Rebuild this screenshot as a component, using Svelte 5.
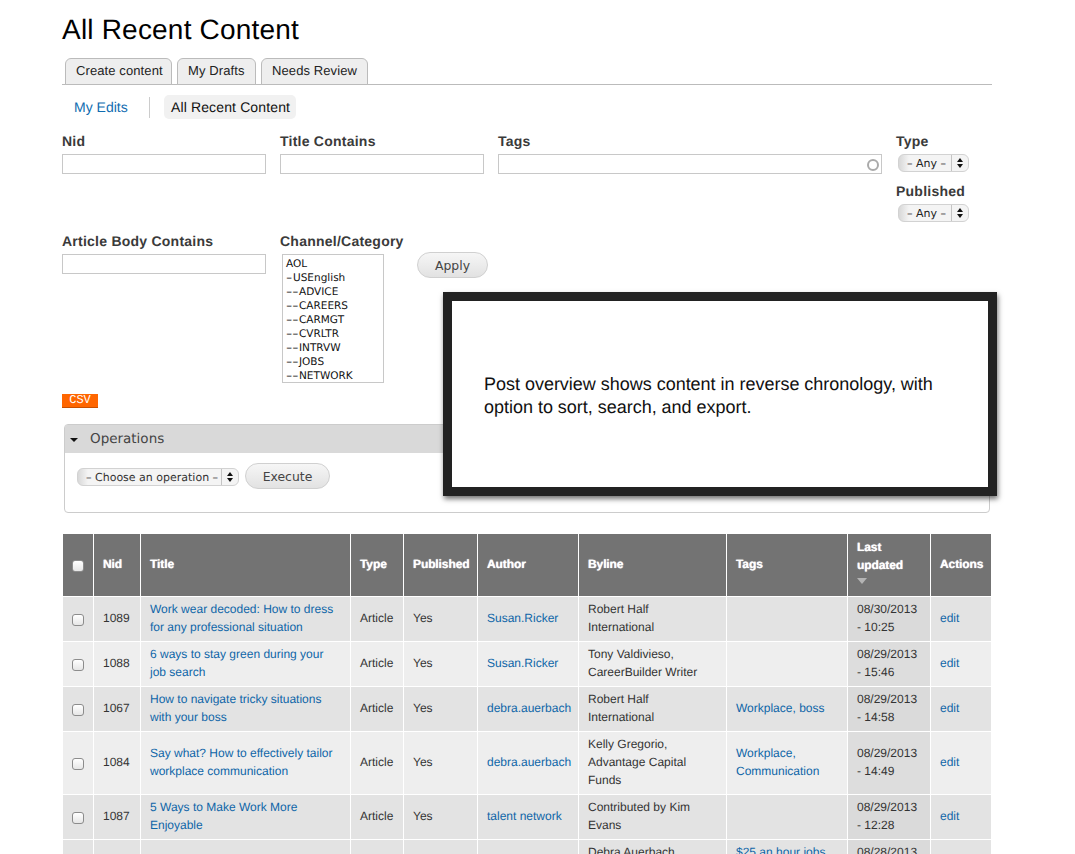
<script>
  const secondary = ['My Edits'];
  const tabs = ['Create content', 'My Drafts', 'Needs Review'];
  const channels = [
    ['', 'AOL'], ['-', 'USEnglish'], ['--', 'ADVICE'], ['--', 'CAREERS'], ['--', 'CARMGT'],
    ['--', 'CVRLTR'], ['--', 'INTRVW'], ['--', 'JOBS'], ['--', 'NETWORK'],
  ];
  const heads = ['Nid', 'Title', 'Type', 'Published', 'Author', 'Byline', 'Tags'];
  const rows = [
    { nid: '1089', title: 'Work wear decoded: How to dress\nfor any professional situation', author: 'Susan.Ricker', byline: 'Robert Half\nInternational', tags: '', date: '08/30/2013\n- 10:25' },
    { nid: '1088', title: '6 ways to stay green during your\njob search', author: 'Susan.Ricker', byline: 'Tony Valdivieso,\nCareerBuilder Writer', tags: '', date: '08/29/2013\n- 15:46' },
    { nid: '1067', title: 'How to navigate tricky situations\nwith your boss', author: 'debra.auerbach', byline: 'Robert Half\nInternational', tags: 'Workplace, boss', date: '08/29/2013\n- 14:58' },
    { nid: '1084', title: 'Say what? How to effectively tailor\nworkplace communication', author: 'debra.auerbach', byline: 'Kelly Gregorio,\nAdvantage Capital\nFunds', tags: 'Workplace,\nCommunication', date: '08/29/2013\n- 14:49' },
    { nid: '1087', title: '5 Ways to Make Work More\nEnjoyable', author: 'talent network', byline: 'Contributed by Kim\nEvans', tags: '', date: '08/29/2013\n- 12:28' },
  ];
</script>

<div class="page">
  <h1>All Recent Content</h1>

  <ul class="tabs">
    {#each tabs as t}<li>{t}</li>{/each}
  </ul>

  <div class="subnav">
    {#each secondary as s}<a href="#top" class="sublink">{s}</a>{/each}
    <span class="pill">All Recent Content</span>
  </div>

  <div class="filters first">
    <div class="f w204"><label for="nid">Nid</label><input id="nid" /></div>
    <div class="f w204"><label for="tc">Title Contains</label><input id="tc" /></div>
    <div class="f w384">
      <label for="tg">Tags</label>
      <div class="auto"><input id="tg" /><span class="throbber"></span></div>
    </div>
    <div class="stack">
      <div class="f">
        <span class="lab">Type</span>
        <div class="sel small"><span class="val">– Any –</span><span class="arrows"><i class="up"></i><i class="down"></i></span></div>
      </div>
      <div class="f">
        <span class="lab">Published</span>
        <div class="sel small"><span class="val">– Any –</span><span class="arrows"><i class="up"></i><i class="down"></i></span></div>
      </div>
    </div>
  </div>

  <div class="filters second">
    <div class="f w204"><label for="ab">Article Body Contains</label><input id="ab" /></div>
    <div class="f channel">
      <span class="lab">Channel/Category</span>
      <div class="listbox">
        {#each channels as [dash, name]}<div class="opt"><span class="dash" class:d1={dash.length === 1} class:d2={dash.length === 2}>{dash}</span><span>{name}</span></div>{/each}
      </div>
    </div>
    <button class="btn apply">Apply</button>
  </div>

  <div class="csv">CSV</div>

  <div class="ops">
    <div class="ops-head"><span class="tri"></span>Operations</div>
    <div class="ops-body">
      <div class="sel big"><span class="val">– Choose an operation –</span><span class="arrows"><i class="up"></i><i class="down"></i></span></div>
      <button class="btn exec">Execute</button>
    </div>
  </div>

  <table>
    <colgroup>
      <col style="width:31px" /><col style="width:47px" /><col style="width:210px" /><col style="width:53px" /><col style="width:74px" /><col style="width:101px" /><col style="width:148px" /><col style="width:121px" /><col style="width:83px" /><col style="width:60px" />
    </colgroup>
    <thead>
      <tr>
        <th class="chk"><input type="checkbox" aria-label="Select all" /></th>
        {#each heads as h}<th>{h}</th>{/each}
        <th>Last<br />updated<br /><span class="sort"></span></th>
        <th>Actions</th>
      </tr>
    </thead>
    <tbody>
      {#each rows as r, i}
        <tr class:odd={i % 2 === 0}>
          <td class="chk"><input type="checkbox" aria-label="Select row" /></td>
          <td>{r.nid}</td>
          <td class="pl"><a href="#top">{r.title}</a></td>
          <td>Article</td>
          <td>Yes</td>
          <td><a href="#top">{r.author}</a></td>
          <td class="pl">{r.byline}</td>
          <td class="pl"><a href="#top">{r.tags}</a></td>
          <td class="pl active">{r.date}</td>
          <td><a href="#top">edit</a></td>
        </tr>
      {/each}
      <tr class="last">
        <td class="chk"></td><td></td><td></td><td></td><td></td><td></td>
        <td>Debra Auerbach</td>
        <td><a href="#top">$25 an hour jobs</a></td>
        <td class="active">08/28/2013</td>
        <td></td>
      </tr>
    </tbody>
  </table>

  <div class="note">
    <p>Post overview shows content in reverse chronology, with option to sort, search, and export.</p>
  </div>
</div>

<style>
  :global(html), :global(body) { margin: 0; background: #fff; }
  .page {
    position: relative;
    box-sizing: border-box;
    width: 1075px;
    height: 854px;
    overflow: hidden;
    padding: 0 83px 0 62px;
    font-family: "Liberation Sans", Arial, sans-serif;
    color: #333;
    text-rendering: geometricPrecision;
  }
  h1 {
    margin: 0;
    padding-top: 13px;
    font-size: 28px;
    line-height: 34px;
    font-weight: 400;
    color: #000;
    letter-spacing: 0.2px;
  }
  .tabs {
    list-style: none;
    display: flex;
    gap: 5px;
    margin: 11px 0 0;
    padding: 0 0 0 3px;
    border-bottom: 1px solid #bbb;
    height: 26px;
  }
  .tabs li {
    box-sizing: border-box;
    height: 27px;
    padding: 0 10px;
    background: #eee;
    border: 1px solid #bbb;
    border-radius: 6px 6px 0 0;
    font-size: 13px;
    line-height: 24px;
    color: #222;
    white-space: nowrap;
    letter-spacing: 0.1px;
  }
  .tabs li:nth-child(1) { width: 107px; }
  .tabs li:nth-child(2) { width: 79px; }
  .tabs li:nth-child(3) { width: 107px; }
  .subnav {
    display: flex;
    align-items: center;
    height: 24px;
    margin-top: 10px;
    font-size: 14px;
  }
  .sublink {
    color: #0f6cb0;
    text-decoration: none;
    padding: 0 20px 0 12px;
    margin-right: 14px;
    border-right: 1px solid #ccc;
    line-height: 21px;
    width: 55px;
  }
  .pill {
    background: #f1f1f1;
    border-radius: 5px;
    padding: 0 6px 0 7px;
    line-height: 24px;
    color: #111;
    letter-spacing: 0.13px;
  }
  .filters { display: flex; }
  .first { margin-top: 14px; height: 100px; }
  .second { margin-top: 0; height: 161px; }
  .f { display: flex; flex-direction: column; margin-right: 14px; }
  .w204 { width: 204px; }
  .w384 { width: 384px; }
  label, .lab {
    display: block;
    height: 21px;
    font-size: 14px;
    line-height: 16px;
    font-weight: 700;
    letter-spacing: 0.24px;
    color: #3a3a3a;
  }
  input:not([type]) {
    box-sizing: border-box;
    display: block;
    width: 100%;
    height: 20px;
    margin: 0;
    padding: 0;
    background: #fff;
    border: 1px solid #c8c8c8;
    border-radius: 0;
    outline: none;
  }
  .auto { position: relative; }
  .throbber {
    position: absolute;
    right: 3px;
    top: 5px;
    width: 8px;
    height: 8px;
    border: 2px solid #aaa;
    border-radius: 50%;
  }
  .stack { display: flex; flex-direction: column; gap: 11px; }
  .sel {
    box-sizing: border-box;
    display: flex;
    align-items: center;
    height: 18px;
    margin-left: 2px;
    border: 1px solid #d2d2d2;
    border-radius: 6px;
    background: linear-gradient(to right, #d8d8d8 0, #f4f4f4 10px, #f4f4f4 100%);
    font-family: "DejaVu Sans", sans-serif;
    color: #222;
    font-size: 11px;
  }
  .small { width: 71px; }
  .big { width: 162px; margin: 2px 0 0; color: #333; }
  .val { flex: 1; padding-left: 8px; white-space: nowrap; }
  .arrows {
    box-sizing: border-box;
    display: flex;
    flex-direction: column;
    align-items: center;
    justify-content: center;
    gap: 2px;
    width: 17px;
    height: 16px;
    border-left: 1px solid #c4c4c4;
  }
  .arrows i { width: 0; height: 0; border-left: 3px solid transparent; border-right: 3px solid transparent; }
  .up { border-bottom: 4px solid #111; }
  .down { border-top: 4px solid #111; }
  .channel { width: 120px; margin-right: 14px; }
  .listbox {
    box-sizing: border-box;
    width: 102px;
    height: 129px;
    margin-left: 2px;
    padding: 2px 3px;
    border: 1px solid #c8c8c8;
    font-family: "DejaVu Sans", sans-serif;
    font-size: 10.5px;
    line-height: 14px;
    color: #111;
    white-space: nowrap;
  }
  .opt { display: flex; height: 14px; }
  .dash {
    display: block;
    width: 0;
    transform: scaleX(1.65);
    transform-origin: left center;
  }
  .d1 { width: 7px; }
  .d2 { width: 13px; }
  .btn {
    box-sizing: border-box;
    height: 26px;
    padding: 0;
    border: 1px solid #d0d0d0;
    border-radius: 13px;
    background: linear-gradient(#f6f6f6, #e2e2e2);
    font-family: "DejaVu Sans", sans-serif;
    font-size: 12.4px;
    color: #444;
  }
  .apply { width: 71px; margin: 19px 0 0 3px; }
  .csv {
    box-sizing: border-box;
    width: 36px;
    height: 14px;
    background: #f60;
    border-bottom: 1px solid #c84f00;
    color: #fff;
    font-family: "Liberation Mono", monospace;
    font-size: 12px;
    line-height: 13px;
    text-align: center;
  }
  .ops {
    box-sizing: border-box;
    width: 926px;
    height: 89px;
    margin: 16px 0 0 2px;
    border: 1px solid #ccc;
    border-radius: 4px;
  }
  .ops-head {
    display: flex;
    align-items: center;
    height: 28px;
    background: #d9d9d9;
    font-family: "DejaVu Sans", sans-serif;
    font-size: 13.5px;
    color: #444;
  }
  .tri {
    width: 0;
    height: 0;
    margin: 2px 12px 0 5px;
    border-left: 4px solid transparent;
    border-right: 4px solid transparent;
    border-top: 4px solid #111;
  }
  .ops-body {
    display: flex;
    align-items: center;
    gap: 6px;
    padding: 10px 0 0 12px;
  }
  .exec { width: 85px; }
  table {
    table-layout: fixed;
    width: 928px;
    margin: 21px 0 0 1px;
    border-collapse: separate;
    border-spacing: 0;
    font-size: 12px;
    line-height: 18px;
  }
  th, td {
    box-sizing: border-box;
    padding: 3px 0 5px 9px;
    border-right: 1px solid #fff;
    border-bottom: 1px solid #fff;
    text-align: left;
    vertical-align: middle;
    overflow: hidden;
    white-space: nowrap;
  }
  th:last-child, td:last-child { border-right: 0; }
  th {
    height: 63px;
    background: #737373;
    color: #fff;
    font-weight: 700;
    letter-spacing: -0.1px;
    text-shadow: 0 0 1px #fff;
  }
  td { height: 45px; background: #eee; color: #333; }
  .odd td { background: #e3e3e3; }
  td.active { background: #ddd; }
  .odd td.active { background: #dadada; }
  .pl { white-space: pre-line; }
  .last td { vertical-align: top; background: #e3e3e3; }
  .last td.active { background: #dadada; }
  td a { color: #0f66a8; text-decoration: none; }
  .chk { padding: 0; text-align: center; }
  input[type="checkbox"] {
    appearance: none;
    display: block;
    box-sizing: border-box;
    width: 12px;
    height: 12px;
    margin: 2px 0 0 9px;
    border: 1px solid #8c8c8c;
    border-radius: 3px;
    background: linear-gradient(#fff, #e6e6e6);
  }
  .sort {
    display: block;
    width: 0;
    height: 0;
    margin: 4px 0 6px;
    border-left: 5px solid transparent;
    border-right: 5px solid transparent;
    border-top: 6px solid #b4b4b4;
  }
  .note {
    position: absolute;
    left: 443px;
    top: 292px;
    box-sizing: border-box;
    width: 554px;
    height: 204px;
    display: flex;
    align-items: center;
    padding: 4px 40px 0 32px;
    background: #fff;
    border: 9px solid #222;
    box-shadow: 1px 3px 5px rgba(0, 0, 0, 0.55);
  }
  .note p {
    margin: 0;
    font-size: 18px;
    line-height: 23px;
    color: #111;
    letter-spacing: -0.02px;
  }
</style>
